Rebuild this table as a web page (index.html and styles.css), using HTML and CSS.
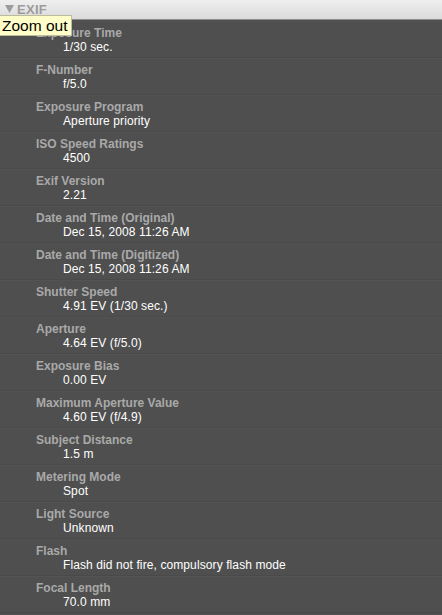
FILE: index.html
```html
<!DOCTYPE html>
<html>
<head>
<meta charset="utf-8">
<link rel="stylesheet" href="styles.css">
</head>
<body>
<div class="panel">
  <div class="header"><svg class="tri" width="9" height="8" viewBox="0 0 9 8"><path d="M0 0H9L4.5 8Z" fill="#9c9c9c"/></svg><span class="title">EXIF</span></div>
  <div class="rows">
    <div class="row"><div class="label">Exposure Time</div><div class="value">1/30 sec.</div></div>
    <div class="row"><div class="label">F-Number</div><div class="value">f/5.0</div></div>
    <div class="row"><div class="label">Exposure Program</div><div class="value">Aperture priority</div></div>
    <div class="row"><div class="label">ISO Speed Ratings</div><div class="value">4500</div></div>
    <div class="row"><div class="label">Exif Version</div><div class="value">2.21</div></div>
    <div class="row"><div class="label">Date and Time (Original)</div><div class="value">Dec 15, 2008 11:26 AM</div></div>
    <div class="row"><div class="label">Date and Time (Digitized)</div><div class="value">Dec 15, 2008 11:26 AM</div></div>
    <div class="row"><div class="label">Shutter Speed</div><div class="value">4.91 EV (1/30 sec.)</div></div>
    <div class="row"><div class="label">Aperture</div><div class="value">4.64 EV (f/5.0)</div></div>
    <div class="row"><div class="label">Exposure Bias</div><div class="value">0.00 EV</div></div>
    <div class="row"><div class="label">Maximum Aperture Value</div><div class="value">4.60 EV (f/4.9)</div></div>
    <div class="row"><div class="label">Subject Distance</div><div class="value">1.5 m</div></div>
    <div class="row"><div class="label">Metering Mode</div><div class="value">Spot</div></div>
    <div class="row"><div class="label">Light Source</div><div class="value">Unknown</div></div>
    <div class="row"><div class="label">Flash</div><div class="value">Flash did not fire, compulsory flash mode</div></div>
    <div class="row"><div class="label">Focal Length</div><div class="value">70.0 mm</div></div>
  </div>
  <div class="tooltip">Zoom out</div>
</div>
</body>
</html>
```

FILE: styles.css
```css
html, body {
  margin: 0;
  padding: 0;
  background: #4f4f4f;
  height: 100%;
  overflow: hidden;
}
.panel {
  position: relative;
  width: 442px;
  height: 615px;
  font-family: "Liberation Sans", Arial, sans-serif;
  background: #4f4f4f;
}
.header {
  height: 20px;
  box-sizing: border-box;
  background: linear-gradient(#efefef, #dbdbdb);
  border-bottom: 1px solid #8e8e8e;
  display: flex;
  align-items: center;
  padding-left: 5px;
  color: #9c9c9c;
  font-weight: bold;
  font-size: 13px;
}
.tri {
  margin-right: 3px;
  margin-top: -1px;
}
.title {
  letter-spacing: 0.3px;
}
.rows {
  display: flex;
  flex-direction: column;
  padding-top: 1px;
}
.row {
  height: 37px;
  box-sizing: border-box;
  padding-top: 5px;
  padding-left: 36px;
  border-bottom: 1px solid #4a4a4a;
  box-shadow: inset 0 1px 0 #535353;
}
.label {
  font-size: 12px;
  font-weight: bold;
  line-height: 14px;
  color: #a9a9a9;
}
.value {
  font-size: 12px;
  line-height: 14px;
  color: #ffffff;
  padding-left: 27px;
  letter-spacing: 0.1px;
}
.tooltip {
  position: absolute;
  left: 0;
  top: 15px;
  height: 21px;
  box-sizing: border-box;
  padding: 0 4px 0 2px;
  background: #fefec8;
  border: 1px solid #bdbd9c;
  border-left: none;
  color: #000;
  font-size: 15.5px;
  line-height: 19px;
}
```
